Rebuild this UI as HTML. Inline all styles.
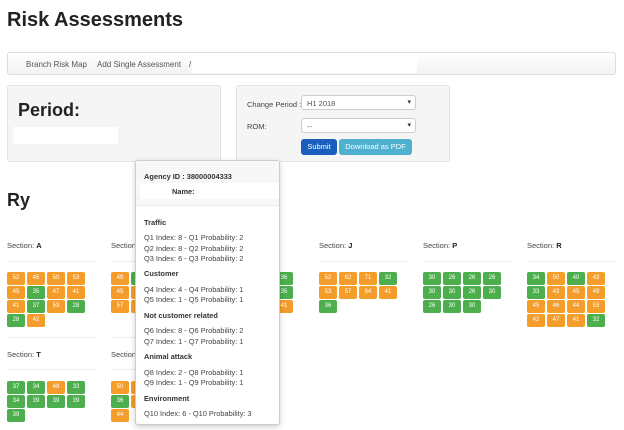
<!DOCTYPE html>
<html><head><meta charset="utf-8"><style>
*{box-sizing:border-box;margin:0;padding:0}
body{width:624px;height:430px;overflow:hidden;background:#fff;font-family:"Liberation Sans",Arial,sans-serif;color:#333;position:relative}
.abs{position:absolute}
h1{position:absolute;left:7px;top:9px;font-size:20px;font-weight:bold;color:#222}
.nav{left:7px;top:52px;width:609px;height:23px;border:1px solid #ddd;border-radius:3px;background:linear-gradient(#fff,#f2f2f2);font-size:8px;color:#555}
.nav span{position:absolute;top:7px}
.well{background:#f5f5f5;border:1px solid #e3e3e3;border-radius:3px}
.sel{position:absolute;height:15px;border:1px solid #ccc;border-radius:3px;background:#fff;font-size:7.5px;padding:3px 5px;color:#555}
.sel:after{content:"▾";position:absolute;right:4px;top:2px;font-size:7px;color:#333}
.btn{position:absolute;height:16px;border-radius:3px;color:#fff;font-size:7.5px;text-align:center;line-height:16px}
.lbl{font-size:7.5px;color:#444;position:absolute}
.sec{position:absolute;font-size:7.5px;color:#444}
.sec b{color:#222}
.hr{position:absolute;height:1px;background:#eee;width:88px}
.tiles{position:absolute;width:84px;display:flex;flex-wrap:wrap}
.t{width:18px;height:13px;margin:0 2px 1px 0;border-radius:2px;font-size:6px;color:#fff;text-align:center;line-height:13px}
.o{background:#f59d2a}.g{background:#4cae4c}
.pop{left:135px;top:160px;width:145px;height:265px;background:#fff;border:1px solid #ccc;border-radius:3px;box-shadow:0 2px 6px rgba(0,0,0,.2);font-size:7.4px;color:#444}
.pop .hd{position:absolute;left:0;top:0;width:143px;height:45px;background:#f7f7f7;border-bottom:1px solid #ebebeb}
.pop b{color:#333}
.pop div.l{position:absolute;left:8px}
</style></head><body>
<h1>Risk Assessments</h1>
<div class="abs nav"><span style="left:18px">Branch Risk Map</span><span style="left:89px">Add Single Assessment</span><span style="left:181px">/</span><div class="abs" style="left:184px;top:4px;width:225px;height:16px;background:#fff"></div></div>
<div class="abs well" style="left:7px;top:85px;width:214px;height:77px"><div class="abs" style="left:10px;top:14px;font-size:18px;font-weight:bold;color:#222">Period:</div><div class="abs" style="left:5px;top:41px;width:105px;height:17px;background:#fff"></div></div>
<div class="abs well" style="left:236px;top:85px;width:214px;height:77px"></div>
<div class="lbl" style="left:247px;top:100px">Change Period :</div>
<div class="sel" style="left:301px;top:95px;width:115px">H1 2018</div>
<div class="lbl" style="left:247px;top:122px">ROM:</div>
<div class="sel" style="left:301px;top:118px;width:115px">--</div>
<div class="btn" style="left:301px;top:139px;width:36px;background:#1a5fbd">Submit</div>
<div class="btn" style="left:339px;top:139px;width:73px;background:#4fb0cf">Download as PDF</div>
<div class="abs" style="left:7px;top:190px;font-size:18px;font-weight:bold;color:#222">Ry</div>

<div class="sec" style="left:7px;top:241px">Section: <b>A</b></div><div class="hr" style="left:7px;top:261px"></div>
<div class="tiles" style="left:7px;top:272px"><div class="t o">52</div><div class="t o">45</div><div class="t o">50</div><div class="t o">53</div><div class="t o">45</div><div class="t g">35</div><div class="t o">47</div><div class="t o">41</div><div class="t o">41</div><div class="t g">37</div><div class="t o">53</div><div class="t g">28</div><div class="t g">28</div><div class="t o">42</div></div>
<div class="sec" style="left:111px;top:241px">Section: <b>B</b></div><div class="hr" style="left:111px;top:261px"></div>
<div class="tiles" style="left:111px;top:272px"><div class="t o">49</div><div class="t g">36</div><div class="t o">45</div><div class="t o">45</div><div class="t o">45</div><div class="t o">45</div><div class="t o">45</div><div class="t o">45</div><div class="t o">57</div><div class="t o">45</div></div>
<div class="tiles" style="left:215px;top:272px"><div class="t g">36</div><div class="t g">36</div><div class="t g">36</div><div class="t g">36</div><div class="t g">35</div><div class="t g">35</div><div class="t g">35</div><div class="t g">35</div><div class="t o">41</div><div class="t o">41</div><div class="t o">41</div><div class="t o">41</div></div>
<div class="sec" style="left:319px;top:241px">Section: <b>J</b></div><div class="hr" style="left:319px;top:261px"></div>
<div class="tiles" style="left:319px;top:272px"><div class="t o">52</div><div class="t o">62</div><div class="t o">71</div><div class="t g">32</div><div class="t o">53</div><div class="t o">57</div><div class="t o">64</div><div class="t o">41</div><div class="t g">36</div></div>
<div class="sec" style="left:423px;top:241px">Section: <b>P</b></div><div class="hr" style="left:423px;top:261px"></div>
<div class="tiles" style="left:423px;top:272px"><div class="t g">30</div><div class="t g">26</div><div class="t g">26</div><div class="t g">26</div><div class="t g">30</div><div class="t g">30</div><div class="t g">26</div><div class="t g">30</div><div class="t g">26</div><div class="t g">30</div><div class="t g">30</div></div>
<div class="sec" style="left:527px;top:241px">Section: <b>R</b></div><div class="hr" style="left:527px;top:261px"></div>
<div class="tiles" style="left:527px;top:272px"><div class="t g">34</div><div class="t o">50</div><div class="t g">40</div><div class="t o">43</div><div class="t g">33</div><div class="t o">43</div><div class="t o">45</div><div class="t o">49</div><div class="t o">45</div><div class="t o">46</div><div class="t o">44</div><div class="t o">53</div><div class="t o">42</div><div class="t o">47</div><div class="t o">41</div><div class="t g">32</div></div>

<div class="hr" style="left:7px;top:337px"></div><div class="hr" style="left:111px;top:337px"></div>
<div class="sec" style="left:7px;top:350px">Section: <b>T</b></div><div class="hr" style="left:7px;top:369px"></div>
<div class="tiles" style="left:7px;top:381px"><div class="t g">37</div><div class="t g">34</div><div class="t o">48</div><div class="t g">33</div><div class="t g">34</div><div class="t g">39</div><div class="t g">39</div><div class="t g">39</div><div class="t g">39</div></div>
<div class="sec" style="left:111px;top:350px">Section: <b>U</b></div><div class="hr" style="left:111px;top:369px"></div>
<div class="tiles" style="left:111px;top:381px"><div class="t o">50</div><div class="t o">50</div><div class="t o">50</div><div class="t o">50</div><div class="t g">36</div><div class="t o">45</div><div class="t o">45</div><div class="t o">45</div><div class="t o">44</div></div>

<div class="abs pop"><div class="hd"></div>
<div class="l" style="top:11px"><b>Agency ID : 38000004333</b></div>
<div class="abs" style="left:4px;top:22px;width:139px;height:16px;background:#fff"></div>
<div class="l" style="left:36px;top:26px"><b>Name:</b></div>
<div class="l" style="top:57px"><b>Traffic</b></div>
<div class="l" style="top:72px">Q1 Index: 8 - Q1 Probability: 2</div>
<div class="l" style="top:83px">Q2 Index: 8 - Q2 Probability: 2</div>
<div class="l" style="top:93px">Q3 Index: 6 - Q3 Probability: 2</div>
<div class="l" style="top:108px"><b>Customer</b></div>
<div class="l" style="top:124px">Q4 Index: 4 - Q4 Probability: 1</div>
<div class="l" style="top:134px">Q5 Index: 1 - Q5 Probability: 1</div>
<div class="l" style="top:150px"><b>Not customer related</b></div>
<div class="l" style="top:165px">Q6 Index: 8 - Q6 Probability: 2</div>
<div class="l" style="top:176px">Q7 Index: 1 - Q7 Probability: 1</div>
<div class="l" style="top:191px"><b>Animal attack</b></div>
<div class="l" style="top:207px">Q8 Index: 2 - Q8 Probability: 1</div>
<div class="l" style="top:217px">Q9 Index: 1 - Q9 Probability: 1</div>
<div class="l" style="top:233px"><b>Environment</b></div>
<div class="l" style="top:248px">Q10 Index: 6 - Q10 Probability: 3</div>
</div>
</body></html>
